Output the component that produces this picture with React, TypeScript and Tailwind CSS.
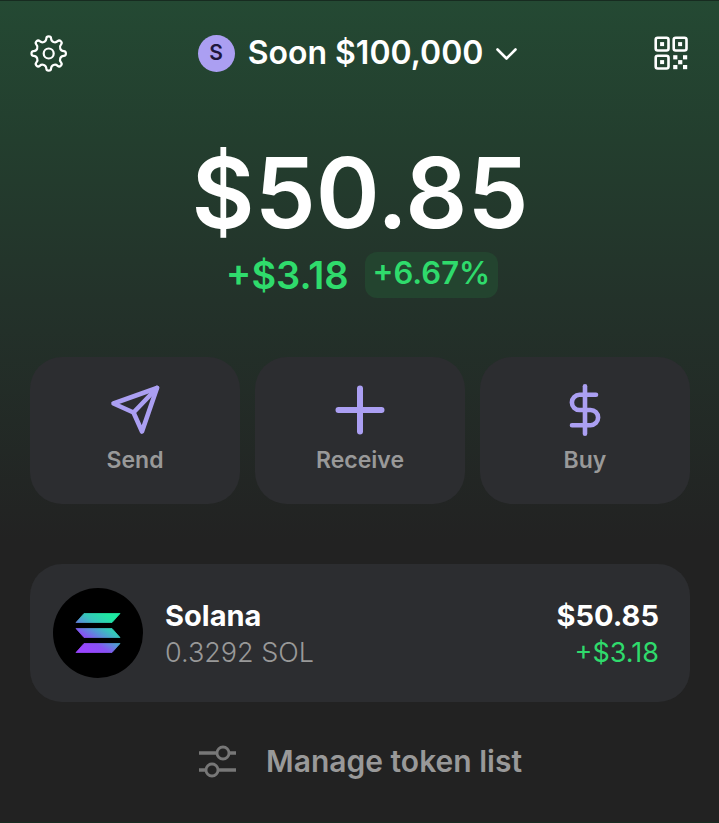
import { useId } from 'react';
import type { ReactNode } from 'react';

const LOBES = 8;

// Smooth eight-lobed outline: one cubic from valley to tip and one back per lobe
function gearPath(cx: number, cy: number, outer: number, inner: number) {
  const step = Math.PI / LOBES;
  const at = (angle: number, radius: number, shift: number) => {
    const x = cx + radius * Math.sin(angle) + shift * Math.cos(angle);
    const y = cy - radius * Math.cos(angle) + shift * Math.sin(angle);
    return `${x.toFixed(2)} ${y.toFixed(2)}`;
  };
  let d = `M${at(-step, inner, 0)}`;
  for (let i = 0; i < LOBES; i++) {
    const tip = i * 2 * step;
    d += `C${at(tip - step, inner, 5)} ${at(tip, outer, -4.6)} ${at(tip, outer, 0)}`;
    d += `C${at(tip, outer, 4.6)} ${at(tip + step, inner, -5)} ${at(tip + step, inner, 0)}`;
  }
  return d + 'Z';
}

function GearIcon() {
  return (
    <svg width="38" height="38" viewBox="0 0 38 38" fill="none" stroke="currentColor" strokeWidth="2.2" aria-hidden="true">
      <path d={gearPath(18.7, 19.5, 17.2, 12.5)} strokeLinejoin="round" />
      <circle cx="18.7" cy="19.5" r="5" />
    </svg>
  );
}

function QrIcon() {
  return (
    <svg width="36" height="34" viewBox="0 0 36 34" aria-hidden="true">
      <g fill="none" stroke="currentColor" strokeWidth="2.6">
        <rect x="1.7" y="1.7" width="12.8" height="12.8" rx="2" />
        <rect x="19.7" y="1.7" width="12.8" height="12.8" rx="2" />
        <rect x="1.7" y="19.7" width="12.8" height="12.8" rx="2" />
      </g>
      <g fill="currentColor">
        <rect x="6.1" y="6.1" width="4" height="4" />
        <rect x="24.1" y="6.1" width="4" height="4" />
        <rect x="6.1" y="24.1" width="4" height="4" />
        <rect x="19.2" y="19.2" width="4.2" height="4.2" />
        <rect x="29" y="19.2" width="4.2" height="4.2" />
        <rect x="24.1" y="24.1" width="4.2" height="4.2" />
        <rect x="19.2" y="29" width="4.2" height="4.2" />
        <rect x="29" y="29" width="4.2" height="4.2" />
      </g>
    </svg>
  );
}

function SendIcon() {
  return (
    <svg width="52" height="52" viewBox="0 0 52 52" fill="none" stroke="currentColor" strokeWidth="4.6" strokeLinejoin="round" strokeLinecap="round" aria-hidden="true">
      <path d="M48 4 4.5 19.5 24.5 28.5 33 47.5Z" />
      <path d="M48 4 24.5 28.5" />
    </svg>
  );
}

function PlusIcon() {
  return (
    <svg width="52" height="52" viewBox="0 0 52 52" fill="none" stroke="currentColor" strokeWidth="6" strokeLinecap="round" aria-hidden="true">
      <path d="M26 4.5v43M4.5 26h43" />
    </svg>
  );
}

function DollarIcon() {
  return (
    <svg width="52" height="52" viewBox="0 0 52 52" fill="none" stroke="currentColor" strokeWidth="4.6" strokeLinecap="round" aria-hidden="true">
      <path d="M26 2.3v47.4" />
      <path d="M37 10.8H20.5a7.6 7.6 0 0 0 0 15.2h11a7.6 7.6 0 0 1 0 15.2H13" />
    </svg>
  );
}

function SlidersIcon() {
  return (
    <svg width="38" height="34" viewBox="0 0 38 34" fill="none" stroke="currentColor" strokeWidth="3.4" aria-hidden="true">
      <path d="M1 9h18M31 9h7M1 26h7M20 26h18" />
      <circle cx="25" cy="9" r="6" strokeWidth="2.8" />
      <circle cx="14" cy="26" r="6" strokeWidth="2.8" />
    </svg>
  );
}

function SolanaLogo() {
  const id = useId();
  return (
    <svg width="90" height="90" viewBox="0 0 90 90" role="img" aria-label="Solana" className="shrink-0">
      <defs>
        <linearGradient id={id} gradientUnits="userSpaceOnUse" x1="31" y1="66" x2="59" y2="24">
          <stop offset="0.08" stopColor="#9945ff" />
          <stop offset="0.3" stopColor="#8752f3" />
          <stop offset="0.5" stopColor="#5497d5" />
          <stop offset="0.65" stopColor="#38c4bd" />
          <stop offset="0.9" stopColor="#1ee9a2" />
        </linearGradient>
      </defs>
      <circle cx="45" cy="45" r="45" fill="#000" />
      <g fill={`url(#${id})`} stroke={`url(#${id})`} strokeWidth="0.8" strokeLinejoin="round">
        <path d="M31 25.5H67L59 34.5H23Z" />
        <path d="M23 40.5H59L67 49.5H31Z" />
        <path d="M31 55.5H67L59 64.5H23Z" />
      </g>
    </svg>
  );
}

function ActionButton({ label, children }: { label: string; children: ReactNode }) {
  return (
    <button type="button" className="flex h-[147px] flex-1 flex-col items-center gap-2 rounded-[32px] bg-[#2c2d30] pt-[27px] text-[#ab9ff2]">
      {children}
      <span className="text-[23px] leading-8 font-semibold text-[#999]">{label}</span>
    </button>
  );
}

export default function App() {
  return (
    <main className="min-h-screen border-y border-y-[#172b20] bg-[#222] bg-[linear-gradient(to_bottom,#244933_0px,#233e2e_140px,#23322a_300px,#222_540px)] pr-[29px] pb-8 pl-[30px] font-['Inter',sans-serif] text-white">
      <header className="flex items-center justify-between pt-8">
        <button type="button" aria-label="Settings" className="flex size-10 items-center">
          <GearIcon />
        </button>
        <button type="button" className="flex items-center gap-[13px]">
          <span className="flex size-[37px] items-center justify-center rounded-full bg-[#ab9ff2] text-[21px] font-semibold text-[#1e173c]">S</span>
          <span className="text-[32px] leading-10 font-semibold">Soon $100,000</span>
          <svg width="22" height="14" viewBox="0 0 22 14" fill="none" stroke="currentColor" strokeWidth="2.6" strokeLinecap="round" strokeLinejoin="round" aria-hidden="true">
            <path d="M1.5 3.5l9 9 9-9" />
          </svg>
        </button>
        <button type="button" aria-label="Show QR code" className="flex h-10 w-11 items-center justify-end">
          <QrIcon />
        </button>
      </header>

      <section className="mt-[60px] flex flex-col items-center">
        <h1 className="text-[97px] leading-[119px] font-semibold">$50.85</h1>
        <div className="flex items-center gap-4 pl-1 text-[#2fdb6c]">
          <p className="text-[38px] leading-[46px] font-semibold">+$3.18</p>
          <p className="rounded-xl bg-[#23442f] px-2 pb-1 text-[31px] leading-[42px] font-semibold">+6.67%</p>
        </div>
      </section>

      <div className="mt-[59px] flex gap-[15px]">
        <ActionButton label="Send">
          <SendIcon />
        </ActionButton>
        <ActionButton label="Receive">
          <PlusIcon />
        </ActionButton>
        <ActionButton label="Buy">
          <DollarIcon />
        </ActionButton>
      </div>

      <button type="button" className="mt-[60px] flex h-[138px] w-full items-center gap-[22px] rounded-[32px] bg-[#2c2d30] pr-[31px] pl-[23px] text-left">
        <SolanaLogo />
        <span className="flex flex-1 flex-col pt-0.5">
          <span className="text-[29px] leading-[38px] font-bold">Solana</span>
          <span className="text-[27px] leading-9 font-light text-[#999]">0.3292 SOL</span>
        </span>
        <span className="flex flex-col pt-0.5 text-right">
          <span className="text-[29px] leading-[38px] font-bold">$50.85</span>
          <span className="text-[27px] leading-9 text-[#2fdb6c]">+$3.18</span>
        </span>
      </button>

      <button type="button" className="mx-auto mt-[39px] flex items-center gap-[30px] text-[#777]">
        <SlidersIcon />
        <span className="text-[30px] leading-10 font-semibold text-[#999]">Manage token list</span>
      </button>
    </main>
  );
}
